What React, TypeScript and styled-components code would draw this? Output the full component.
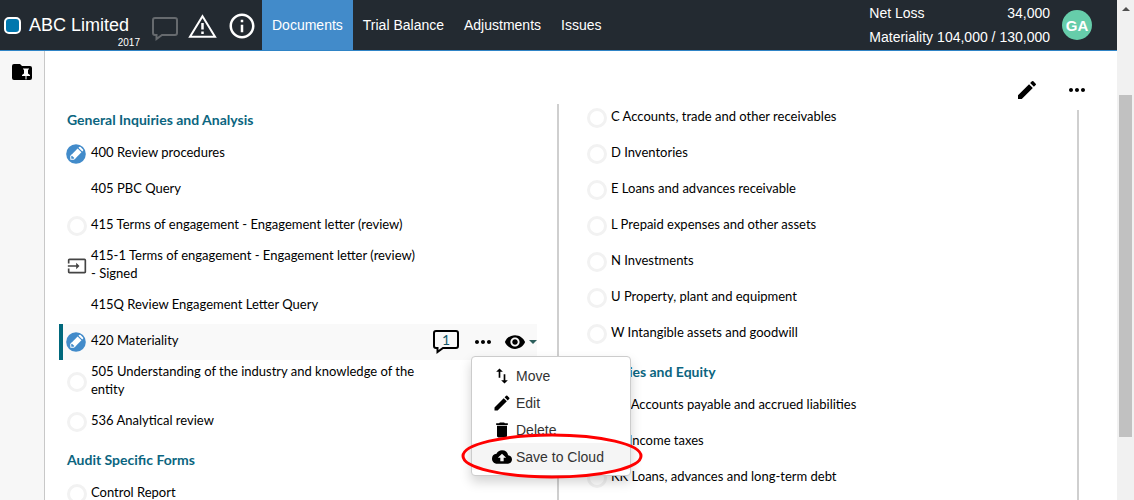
import React from 'react';
import styled, { createGlobalStyle } from 'styled-components';
import {
  MdSwapVert,
  MdEdit,
  MdDelete,
  MdCloudUpload,
  MdVisibility,
  MdMoreHoriz,
  MdInput,
  MdInfoOutline,
} from 'react-icons/md';

const GlobalStyle = createGlobalStyle`
  *, *::before, *::after { box-sizing: border-box; }
  body {
    margin: 0;
    background: #fff;
    color: #000;
    font-family: "Liberation Sans", Arial, sans-serif;
    font-size: 14px;
  }
  button { font: inherit; color: inherit; background: none; border: 0; padding: 0; cursor: pointer; }
  ul, dl, dd, h1, h2 { margin: 0; padding: 0; list-style: none; }
  svg { display: block; flex: none; }
`;

const Window = styled.div`
  display: flex;
  height: 100vh;
  overflow: hidden;
`;

const Page = styled.div`
  flex: 1;
  min-width: 0;
  display: flex;
  flex-direction: column;
`;

const ScrollTrack = styled.div`
  width: 17px;
  flex: none;
  background: #f1f1f1;
  display: flex;
  flex-direction: column;
  align-items: center;
  padding-top: 7px;
`;

const ScrollArrow = styled.div`
  border: 4px solid transparent;
  border-top-width: 0;
  border-bottom-color: #505050;
`;

const ScrollThumb = styled.div`
  width: 13px;
  height: 342px;
  margin-top: 84px;
  background: #c1c1c1;
`;

const Header = styled.header`
  height: 51px;
  flex: none;
  display: flex;
  align-items: center;
  padding: 0 25px 0 4px;
  background: #232a31;
  border-bottom: 1px solid #2f84c6;
  color: #fff;
`;

const Logo = styled.span`
  width: 17px;
  height: 17px;
  flex: none;
  border: 2px solid #fff;
  border-radius: 5px;
  background: #0077ae;
`;

const Engagement = styled.div`
  width: 111px;
  margin-left: 8px;
  padding-top: 12px;
`;

const ClientName = styled.h1`
  font-size: 18px;
  line-height: 24px;
  font-weight: 400;
  white-space: nowrap;
`;

const Year = styled.div`
  font-size: 10px;
  line-height: 12px;
  text-align: right;
`;

const HeaderIcons = styled.div`
  display: flex;
  align-items: center;
  gap: 10px;
  margin: 0 5px 0 12px;
  padding-top: 2px;
`;

const IconButton = styled.button`
  display: flex;
  align-items: center;
  justify-content: center;
`;

const HeaderComment = styled(IconButton)`
  padding-top: 6px;
`;

const Nav = styled.nav`
  display: flex;
  align-self: stretch;
`;

const NavLink = styled.a<{ $active?: boolean }>`
  display: flex;
  align-items: center;
  padding: 0 10px;
  color: #fff;
  text-decoration: none;
  white-space: nowrap;
  background: ${(p) => (p.$active ? '#428bca' : 'transparent')};
`;

const Totals = styled.dl`
  margin-left: auto;
  line-height: 24px;
  white-space: nowrap;
`;

const Total = styled.div`
  display: flex;
  justify-content: space-between;
  gap: 4px;
`;

const Avatar = styled.button`
  width: 30px;
  height: 30px;
  flex: none;
  margin-left: 12px;
  border-radius: 50%;
  background: #66cdaa;
  color: #fff;
  font-size: 15px;
  font-weight: 700;
`;

const Body = styled.div`
  flex: 1;
  display: flex;
  min-height: 0;
`;

const Sidebar = styled.aside`
  width: 45px;
  flex: none;
  padding: 13px 0 0 12px;
  background: #f7f7f7;
  border-right: 1px solid #c8c8c8;
`;

const Main = styled.main`
  flex: 1;
  min-width: 0;
  padding: 0 38px 0 14px;
`;

const Toolbar = styled.div`
  display: flex;
  align-items: center;
  justify-content: flex-end;
  gap: 26px;
  height: 49px;
  padding-top: 29px;
  margin-right: -10px;
`;

const Columns = styled.div`
  display: grid;
  grid-template-columns: 1fr 2px 1fr 2px;
  column-gap: 20px;
`;

const Column = styled.div`
  min-width: 0;
  font-family: Lato, "Liberation Sans", sans-serif;
  font-size: 13px;
  line-height: 18px;
`;

const Divider = styled.div<{ $offset: number }>`
  margin: ${(p) => p.$offset}px 0 -60px;
  background: #cfcfcf;
`;

const SectionTitle = styled.h2`
  height: 36px;
  padding: 11px 0 0 8px;
  color: #0b6580;
  font-size: 14px;
  line-height: 18px;
  font-weight: 700;
`;

const Row = styled.li<{ $selected?: boolean }>`
  position: relative;
  display: grid;
  grid-template-columns: 20px 1fr 104px;
  column-gap: 4px;
  align-items: center;
  min-height: 36px;
  padding: 2px 0 2px 4px;
  border-left: 4px solid ${(p) => (p.$selected ? '#00687c' : 'transparent')};
  background: ${(p) => (p.$selected ? '#f9f9f9' : 'transparent')};
`;

const DocLink = styled.a`
  grid-column: 2;
  padding: 0 10px 4px 0;
  color: #000;
  text-decoration: none;
`;

const EmptyStatus = styled.span`
  width: 20px;
  height: 20px;
  border: 3px solid #f2f2f2;
  border-radius: 50%;
`;

const Actions = styled.div`
  display: flex;
  align-items: center;
  height: 26px;
`;

const CommentButton = styled.button`
  position: relative;
  width: 26px;
  height: 24px;
  margin-right: 12px;
`;

const CommentCount = styled.span`
  position: absolute;
  inset: 0 0 4px;
  font-family: Lato, sans-serif;
  font-size: 14px;
  line-height: 20px;
  color: #17586b;
`;

const ViewButton = styled(IconButton)`
  margin-left: 9px;
  gap: 3px;
`;

const Caret = styled.span`
  border: 4px solid transparent;
  border-bottom-width: 0;
  border-top-color: #2c5f5c;
`;

const Menu = styled.ul`
  position: absolute;
  z-index: 2;
  top: 32px;
  right: -94px;
  width: 160px;
  padding: 5px 0;
  border: 1px solid #ccc;
  border-radius: 4px;
  background: #fff;
  box-shadow: 0 6px 12px rgba(0, 0, 0, 0.175);
  font-family: "Liberation Sans", Arial, sans-serif;
  font-size: 14px;
`;

const MenuItem = styled.li<{ $active?: boolean }>`
  position: relative;
  background: ${(p) => (p.$active ? '#f5f5f5' : 'transparent')};
`;

const MenuButton = styled.button`
  display: flex;
  align-items: center;
  gap: 4px;
  width: 100%;
  height: 27px;
  padding-left: 20px;
  color: #333;
  svg { color: #000; }
`;

const Highlight = styled.svg`
  position: absolute;
  top: -10px;
  left: -11px;
  pointer-events: none;
`;

const CommentShape = ({ color }: { color: string }) => (
  <svg width="26" height="24" viewBox="0 0 26 24" fill="none" stroke={color} strokeWidth="2">
    <path d="M3 1h20a2 2 0 0 1 2 2v13a2 2 0 0 1-2 2H10l-5.500 4V18H3a2 2 0 0 1-2-2V3a2 2 0 0 1 2-2z" />
  </svg>
);

const WarningShape = () => (
  <svg width="29" height="24" viewBox="0 0 29 24" fill="none" stroke="#fff" strokeWidth="2">
    <path d="M14.500 2.200L27 22.800H2z" />
    <path d="M14.500 9v6.500M14.500 17.500v2.500" strokeWidth="2.500" />
  </svg>
);

const PinnedFolder = () => (
  <svg width="20" height="16" viewBox="0 0 20 16">
    <path fill="#000" d="M2 0h6l2 2h8a2 2 0 0 1 2 2v10a2 2 0 0 1-2 2H2a2 2 0 0 1-2-2V2a2 2 0 0 1 2-2z" />
    <path fill="#fff" d="M11 4.500h6v1h-1v4l2 1.500v1h-3.500V15l-.5.700-.5-.700v-3H10v-1L12 9.500v-4h-1z" />
  </svg>
);

const InProgress = () => (
  <svg width="20" height="20" viewBox="0 0 20 20" overflow="visible">
    <circle cx="9" cy="10" r="9.800" fill="#428bca" />
    <g transform="rotate(45 9 10)">
      <rect x="6.300" y="5" width="5.400" height="9" fill="#fff" />
      <path fill="#fff" d="M6.300 3.800V2.800a1 1 0 0 1 1-1h3.400a1 1 0 0 1 1 1v1z" />
      <path fill="none" stroke="#fff" strokeWidth="1" d="M6.800 13.500v1.800l2.200 2 2.200-2v-1.800" />
    </g>
  </svg>
);

type Status = 'none' | 'empty' | 'progress' | 'input';
type Doc = { title: string; status: Status; selected?: boolean };

const inquiries: Doc[] = [
  { title: '400 Review procedures', status: 'progress' },
  { title: '405 PBC Query', status: 'none' },
  { title: '415 Terms of engagement - Engagement letter (review)', status: 'empty' },
  { title: '415-1 Terms of engagement - Engagement letter (review) - Signed', status: 'input' },
  { title: '415Q Review Engagement Letter Query', status: 'none' },
  { title: '420 Materiality', status: 'progress', selected: true },
  { title: '505 Understanding of the industry and knowledge of the entity', status: 'empty' },
  { title: '536 Analytical review', status: 'empty' },
];

const auditForms: Doc[] = [{ title: 'Control Report', status: 'empty' }];

const assets: Doc[] = [
  'C Accounts, trade and other receivables',
  'D Inventories',
  'E Loans and advances receivable',
  'L Prepaid expenses and other assets',
  'N Investments',
  'U Property, plant and equipment',
  'W Intangible assets and goodwill',
].map((title) => ({ title, status: 'empty' }));

const liabilities: Doc[] = [
  'BB Accounts payable and accrued liabilities',
  'FF Income taxes',
  'KK Loans, advances and long-term debt',
].map((title) => ({ title, status: 'empty' }));

const StatusIcon = ({ status }: { status: Status }) => {
  if (status === 'progress') return <InProgress />;
  if (status === 'input') return <MdInput size={20} color="#444" />;
  if (status === 'empty') return <EmptyStatus />;
  return null;
};

const DocumentMenu = () => (
  <Menu>
    <MenuItem><MenuButton><MdSwapVert size={20} />Move</MenuButton></MenuItem>
    <MenuItem><MenuButton><MdEdit size={20} />Edit</MenuButton></MenuItem>
    <MenuItem><MenuButton><MdDelete size={20} />Delete</MenuButton></MenuItem>
    <MenuItem $active>
      <MenuButton><MdCloudUpload size={20} />Save to Cloud</MenuButton>
      <Highlight width="182" height="46" viewBox="0 0 182 46">
        <ellipse cx="91" cy="23" rx="89" ry="21" fill="none" stroke="#f00" strokeWidth="3" />
      </Highlight>
    </MenuItem>
  </Menu>
);

const DocumentList = ({ docs }: { docs: Doc[] }) => (
  <ul>
    {docs.map((doc) => (
      <Row key={doc.title} $selected={doc.selected}>
        <StatusIcon status={doc.status} />
        <DocLink href="#">{doc.title}</DocLink>
        {doc.selected && (
          <>
            <Actions>
              <CommentButton aria-label="1 comment">
                <CommentShape color="#000" />
                <CommentCount>1</CommentCount>
              </CommentButton>
              <IconButton aria-label="More"><MdMoreHoriz size={24} /></IconButton>
              <ViewButton aria-label="View"><MdVisibility size={22} /><Caret /></ViewButton>
            </Actions>
            <DocumentMenu />
          </>
        )}
      </Row>
    ))}
  </ul>
);

export default function App() {
  return (
    <Window>
      <GlobalStyle />
      <Page>
        <Header>
          <Logo />
          <Engagement>
            <ClientName>ABC Limited</ClientName>
            <Year>2017</Year>
          </Engagement>
          <HeaderIcons>
            <HeaderComment aria-label="Comments"><CommentShape color="#666a6e" /></HeaderComment>
            <IconButton aria-label="Warnings"><WarningShape /></IconButton>
            <IconButton aria-label="Information"><MdInfoOutline size={30} /></IconButton>
          </HeaderIcons>
          <Nav>
            <NavLink href="#" $active>Documents</NavLink>
            <NavLink href="#">Trial Balance</NavLink>
            <NavLink href="#">Adjustments</NavLink>
            <NavLink href="#">Issues</NavLink>
          </Nav>
          <Totals>
            <Total><dt>Net Loss</dt><dd>34,000</dd></Total>
            <Total><dt>Materiality</dt><dd>104,000 / 130,000</dd></Total>
          </Totals>
          <Avatar>GA</Avatar>
        </Header>
        <Body>
          <Sidebar>
            <IconButton aria-label="Pinned folder"><PinnedFolder /></IconButton>
          </Sidebar>
          <Main>
            <Toolbar>
              <IconButton aria-label="Edit"><MdEdit size={24} /></IconButton>
              <IconButton aria-label="More"><MdMoreHoriz size={24} /></IconButton>
            </Toolbar>
            <Columns>
              <Column>
                <SectionTitle>General Inquiries and Analysis</SectionTitle>
                <DocumentList docs={inquiries} />
                <SectionTitle>Audit Specific Forms</SectionTitle>
                <DocumentList docs={auditForms} />
              </Column>
              <Divider $offset={4} />
              <Column>
                <DocumentList docs={assets} />
                <SectionTitle>Liabilities and Equity</SectionTitle>
                <DocumentList docs={liabilities} />
              </Column>
              <Divider $offset={10} />
            </Columns>
          </Main>
        </Body>
      </Page>
      <ScrollTrack>
        <ScrollArrow />
        <ScrollThumb />
      </ScrollTrack>
    </Window>
  );
}
